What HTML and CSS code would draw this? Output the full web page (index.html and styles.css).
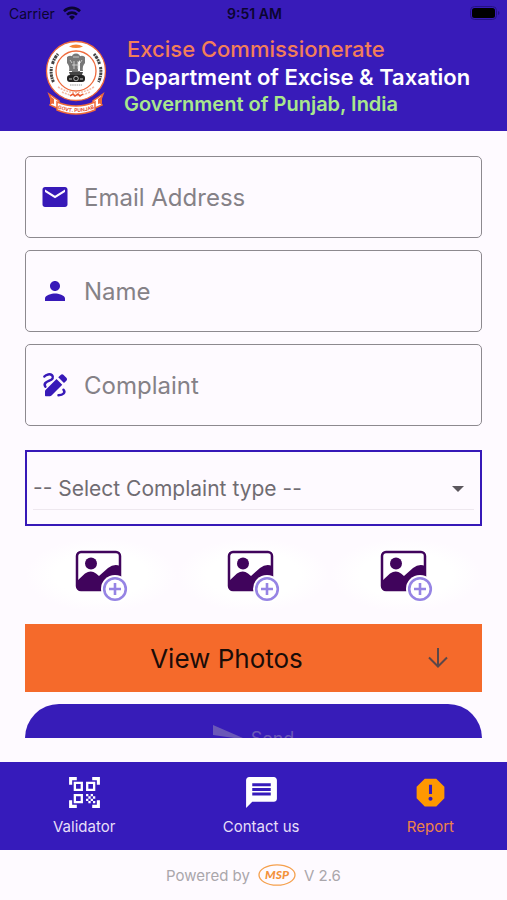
FILE: index.html
```html
<!DOCTYPE html>
<html lang="en">
<head>
<meta charset="utf-8">
<meta name="viewport" content="width=device-width, initial-scale=1">
<title>Report a complaint</title>
<link rel="stylesheet" href="styles.css">
</head>
<body>
<header class="top">
  <div class="status">
    <span class="status-left">Carrier
      <svg class="wifi" viewBox="0 0 18 14" aria-hidden="true"><g fill="none" stroke="currentColor" stroke-width="2.6"><path d="M1 5.2a11.4 11.4 0 0 1 16 0"/><path d="M4 8.6a7.2 7.2 0 0 1 10 0"/></g><path d="M9 14l-3-3.1a4.3 4.3 0 0 1 6 0z" fill="currentColor"/></svg>
    </span>
    <span class="status-time">9:51 AM</span>
    <svg class="battery" viewBox="0 0 30 14" aria-hidden="true"><rect x=".5" y=".5" width="26" height="13" rx="4" fill="none" stroke="#241284"/><rect x="2" y="2" width="23" height="10" rx="2.5"/><path d="M28 5v4q1.500-.5 1.500-2t-1.500-2z" fill="#241284"/></svg>
  </div>
  <div class="brand">
    <svg class="emblem" viewBox="0 0 62 76" role="img" aria-label="Punjab government emblem">
      <circle cx="31" cy="31" r="29.500" fill="#fff" stroke="#ee6a3c" stroke-width="1.300"/>
      <circle cx="31" cy="31" r="20" fill="#fff" stroke="#ee6a3c" stroke-width="1.300"/>
      <path d="M24 6.500q7-4 14 0-7 3-14 0z" fill="#f58233"/>
      <g fill="none" stroke="#444" stroke-width="3"><path d="M8.500 42A25 25 0 0 1 6.500 27" stroke-dasharray="2.500 .8 1.500 .7"/><path d="M7.500 24A25 25 0 0 1 13 14" stroke-dasharray="3 .8 1.800 .7"/><path d="M49 14a25 25 0 0 1 5.500 10" stroke-dasharray="2 .7 3 .8"/><path d="M55.500 27a25 25 0 0 1-2 15" stroke-dasharray="2.500 .7 1.500 .8"/></g>
      <path d="M13 47q18 11 36 0M17 52q14 7 28 0" fill="none" stroke="#f6b9a3" stroke-width="1.500" stroke-dasharray="2 1"/>
      <path d="M25 56l3-2 2 2 3-2 2 2 3-2" fill="none" stroke="#e9522a" stroke-width="1.500"/>
      <g fill="#777"><circle cx="31" cy="18" r="4.500"/><path d="M22 17q4-3 7 1v13h-5q1-5-2-8zM40 17q-4-3-7 1v13h5q-1-5 2-8zM27 20h8v13h-8z"/></g>
      <g fill="none" stroke="#ddd" stroke-width=".8"><path d="M28 17h6M29 21v8M33 21v8M25 20l2 3M37 20l-2 3M27 25h8"/></g>
      <path d="M24 32h14l-1 3H25z" fill="#444"/>
      <rect x="22" y="35" width="18" height="7" rx="3" fill="#222"/>
      <circle cx="31" cy="38.500" r="2.300" fill="none" stroke="#ddd" stroke-width=".8"/><path d="M24 39h3M35 39h3" stroke="#ccc"/>
      <path d="M25 45h12" stroke="#999" stroke-dasharray="1.500 .7"/>
      <path d="M4 54l10 7v8l-9-4 2-3zM58 54l-10 7v8l9-4-2-3z" fill="#fff" stroke="#ef6938" stroke-width="1.500"/>
      <path d="M5 56l4 3v5l-4-1zM57 56l-4 3v5l4-1z" fill="#ee6838"/>
      <path d="M12 62q19 8 38 0v8q-19 8-38 0z" fill="#fff" stroke="#ef6938" stroke-width="1.500"/>
      <path id="ribbon" d="M14 69q17 6 34 0" fill="none"/>
      <text class="ribbon-text"><textPath href="#ribbon" startOffset="50%">GOVT. PUNJAB</textPath></text>
    </svg>
    <div class="titles">
      <div class="title-office">Excise Commissionerate</div>
      <div class="title-dept">Department of Excise &amp; Taxation</div>
      <div class="title-gov">Government of Punjab, India</div>
    </div>
  </div>
</header>

<main class="scroll">
  <form class="form">
    <label class="field">
      <svg class="field-icon" viewBox="0 0 24 24" aria-hidden="true"><path d="M20 4H4c-1.100 0-2 .9-2 2v12c0 1.100.9 2 2 2h16c1.100 0 2-.9 2-2V6c0-1.100-.9-2-2-2zm0 4l-8 5-8-5V6l8 5 8-5v2z"/></svg>
      <input type="email" placeholder="Email Address" aria-label="Email Address">
    </label>
    <label class="field">
      <svg class="field-icon" viewBox="0 0 24 24" aria-hidden="true"><path d="M12 12c2.210 0 4-1.790 4-4s-1.790-4-4-4-4 1.790-4 4 1.790 4 4 4zm0 2c-2.670 0-8 1.340-8 4v2h16v-2c0-2.660-5.330-4-8-4z"/></svg>
      <input type="text" placeholder="Name" aria-label="Name">
    </label>
    <label class="field">
      <svg class="field-icon" viewBox="0 0 24 24" aria-hidden="true"><path d="M13.200 7.200l4.600 4.600-8.600 8.600c-.4.400-.8.600-1.300.6H4.600c-.4 0-.6-.2-.6-.6v-3.300c0-.5.200-.9.600-1.300zM14.600 5.800l1.900-1.900c.7-.7 1.700-.7 2.400 0l2.200 2.200c.7.7.7 1.700 0 2.400l-1.900 1.900z"/><path class="line" d="M3.500 5.200C5 3.500 8 2.800 9.600 4.200c1.700 1.700.4 3.300-2.100 4.300C4.500 9.700 2.800 11 4.300 13.300M18.800 15.800c1.800 2.200-.2 4.300-4 4.400"/></svg>
      <input type="text" placeholder="Complaint" aria-label="Complaint">
    </label>

    <div class="select-box">
      <div class="select-line">
        <select aria-label="Complaint type"><option>-- Select Complaint type --</option></select>
        <svg class="caret" viewBox="0 0 12 6" aria-hidden="true"><path d="M0 0h12L6 6z"/></svg>
      </div>
    </div>

    <div class="photos">
      <button type="button" class="photo" aria-label="Add first photo"><svg viewBox="0 0 54 54" aria-hidden="true"><use href="#photo"/></svg></button>
      <button type="button" class="photo" aria-label="Add second photo"><svg viewBox="0 0 54 54" aria-hidden="true"><use href="#photo"/></svg></button>
      <button type="button" class="photo" aria-label="Add third photo"><svg viewBox="0 0 54 54" aria-hidden="true"><use href="#photo"/></svg></button>
    </div>

    <button type="button" class="view">
      <span>View Photos</span>
      <svg viewBox="0 0 20 20" aria-hidden="true"><path d="M10 0v18M1 9.500l9 9 9-9"/></svg>
    </button>
    <button type="submit" class="send" disabled>
      <svg viewBox="0 0 30 26" aria-hidden="true"><path d="M0 0l30 13L0 26V16l21-3L0 10z"/></svg>
      <span>Send</span>
    </button>
  </form>
</main>

<nav class="tabs">
  <a class="tab" href="#validator">
    <svg viewBox="0 0 24 24" aria-hidden="true"><path d="M9.500 6.500v3h-3v-3h3M11 5H5v6h6V5zm-1.500 9.500v3h-3v-3h3M11 13H5v6h6v-6zm6.500-6.500v3h-3v-3h3M19 5h-6v6h6V5zm-6 8h1.500v1.500H13V13zm1.500 1.500H16V16h-1.500v-1.500zM16 13h1.500v1.500H16V13zm-3 3h1.500v1.500H13V16zm1.500 1.500H16V19h-1.500v-1.500zM16 16h1.500v1.500H16V16zm1.500-1.500H19V16h-1.500v-1.500zm0 3H19V19h-1.500v-1.500zM22 7h-2V4h-3V2h5v5zm0 15v-5h-2v3h-3v2h5zM2 22h5v-2H4v-3H2v5zM2 2v5h2V4h3V2H2z"/></svg>
    <span>Validator</span>
  </a>
  <a class="tab" href="#contact">
    <svg viewBox="0 0 24 24" aria-hidden="true"><path d="M20 2H4c-1.100 0-2 .9-2 2v18l4-4h14c1.100 0 2-.9 2-2V4c0-1.100-.9-2-2-2zm-2 12H6v-2h12v2zm0-3H6V9h12v2zm0-3H6V6h12v2z"/></svg>
    <span>Contact us</span>
  </a>
  <a class="tab tab-active" href="#report" aria-current="page">
    <svg viewBox="0 0 24 24" aria-hidden="true"><path d="M15.730 3H8.270L3 8.270v7.460L8.270 21h7.460L21 15.730V8.270L15.730 3zM12 17.300c-.72 0-1.300-.58-1.300-1.300s.58-1.300 1.300-1.300 1.300.58 1.300 1.300-.58 1.300-1.300 1.300zm1-4.300h-2V7h2v6z"/></svg>
    <span>Report</span>
  </a>
</nav>
<footer class="foot">
  <span>Powered by</span>
  <svg class="msp" viewBox="0 0 38 22" role="img" aria-label="MSP"><ellipse cx="19" cy="11" rx="18" ry="10.200"/><text x="19" y="15">MSP</text></svg>
  <span>V 2.6</span>
</footer>

<svg class="defs" aria-hidden="true">
  <symbol id="photo" viewBox="0 0 54 54">
    <rect x="3" y="4" width="43" height="38" rx="4" fill="#fff" stroke="#40045c" stroke-width="2.500"/>
    <circle cx="17" cy="15.500" r="6" fill="#40045c"/>
    <path d="M3 33l8-7.500q6-4 11 0l3 2.500 9-8q6-4.500 12-2v20q0 4-4 4H7q-4 0-4-4z" fill="#40045c"/>
    <circle cx="41" cy="41" r="14" fill="#fff"/>
    <circle cx="41" cy="41" r="10.800" fill="#fff" stroke="#9684e4" stroke-width="2.600"/>
    <path d="M41 35v12M35 41h12" stroke="#9684e4" stroke-width="2.600"/>
  </symbol>
</svg>
</body>
</html>
```
FILE: styles.css
```css
* { box-sizing: border-box; }

body {
  margin: 0;
  height: 100vh;
  display: flex;
  flex-direction: column;
  background: #fefaff;
  font-family: Inter, "Liberation Sans", sans-serif;
}

button, input, select { font: inherit; }

.defs { display: none; }

.top {
  flex: none;
  background: #381bb9;
}

.status {
  display: grid;
  grid-template-columns: 1fr auto 1fr;
  align-items: center;
  height: 26px;
  padding: 0 7px 0 9px;
  font-size: 14px;
  color: #0b0530;
}

.status-left {
  display: flex;
  align-items: center;
  gap: 8px;
}

.wifi { width: 18px; height: 14px; }
.status-time { font-weight: 600; }
.battery { width: 30px; height: 14px; justify-self: end; }

.brand {
  display: flex;
  gap: 16px;
  padding: 10px 32px 15px 45px;
}

.emblem { flex: none; width: 62px; height: 76px; margin-top: 4px; }

.ribbon-text {
  font-size: 5px;
  font-weight: 700;
  text-anchor: middle;
  fill: #e9522a;
}

.titles {
  font-weight: 600;
  white-space: nowrap;
}

.title-office { padding-left: 4px; font-size: 22px; font-weight: 500; line-height: 26px; color: #f27e59; }
.title-dept { padding-left: 2px; font-size: 22px; line-height: 30px; color: #fff; }
.title-gov { padding-left: 1px; font-size: 20px; line-height: 24px; color: #a9e88c; }

.scroll {
  flex: 1;
  min-height: 0;
  margin-bottom: 24px;
  padding: 25px 25px 0;
  overflow: hidden;
}

.form {
  display: flex;
  flex-direction: column;
  gap: 12px;
}

.field {
  display: flex;
  align-items: center;
  gap: 14px;
  height: 82px;
  padding: 0 14px;
  border: 1px solid #8d898f;
  border-radius: 5px;
}

.field-icon {
  flex: none;
  width: 30px;
  height: 30px;
  fill: #3719b8;
}

.line {
  fill: none;
  stroke: #3719b8;
  stroke-width: 2;
  stroke-linecap: round;
}

.field input {
  flex: 1;
  min-width: 0;
  padding: 0;
  border: 0;
  outline: 0;
  background: none;
  font-size: 24px;
  color: #333;
}

.field input::placeholder { color: #858187; opacity: 1; }

.select-box {
  height: 76px;
  margin-top: 12px;
  padding: 16px 6px;
  border: 2px solid #3719b8;
}

.select-line {
  display: flex;
  align-items: center;
  height: 42px;
  padding-right: 10px;
  border-bottom: 1px solid #eee8ef;
}

.select-line select {
  flex: 1;
  min-width: 0;
  padding: 0;
  border: 0;
  background: none;
  appearance: none;
  font-size: 21px;
  color: #706c72;
}

.caret { width: 12px; height: 6px; fill: #5b575d; }

.photos {
  display: grid;
  grid-template-columns: repeat(3, 1fr);
  height: 74px;
}

.photo {
  display: grid;
  place-items: center;
  padding: 0;
  border: 0;
  background: radial-gradient(closest-side, #fff 60%, #fefaff);
}

.photo svg { width: 54px; height: 54px; }

.view {
  display: flex;
  align-items: center;
  height: 68px;
  padding: 0 34px 0 0;
  border: 0;
  background: #f56a2b;
  color: #1a0c08;
  font-size: 26px;
}

.view span { flex: 1; }

.view svg {
  width: 20px;
  height: 20px;
  fill: none;
  stroke: #5b4749;
  stroke-width: 2;
}

.send {
  display: flex;
  align-items: center;
  justify-content: center;
  gap: 8px;
  height: 68px;
  border: 0;
  border-radius: 34px;
  background: #371cb8;
  color: #6b58b8;
  font-size: 18px;
}

.send svg { width: 30px; height: 26px; fill: #6b58b8; }

.tabs {
  flex: none;
  display: flex;
  justify-content: space-between;
  height: 88px;
  padding: 0 53px;
  background: #361bbb;
}

.tab {
  display: flex;
  flex-direction: column;
  align-items: center;
  gap: 6px;
  padding-top: 12px;
  color: #fff;
  font-size: 15px;
  line-height: 20px;
  text-decoration: none;
}

.tab svg { width: 37px; height: 37px; fill: currentColor; }
.tab span { color: #e6dff8; }
.tab-active { color: #ff9800; }
.tab-active span { color: #ef8348; }

.foot {
  flex: none;
  display: flex;
  align-items: center;
  justify-content: center;
  gap: 8px;
  height: 50px;
  color: #aaa6ab;
  font-size: 15px;
}

.msp { width: 38px; height: 22px; }
.msp ellipse { fill: none; stroke: #f5a04d; stroke-width: 1.3; }
.msp text { font-family: Lato, sans-serif; font-size: 12px; font-weight: 900; font-style: italic; text-anchor: middle; fill: #f3923b; }
```
